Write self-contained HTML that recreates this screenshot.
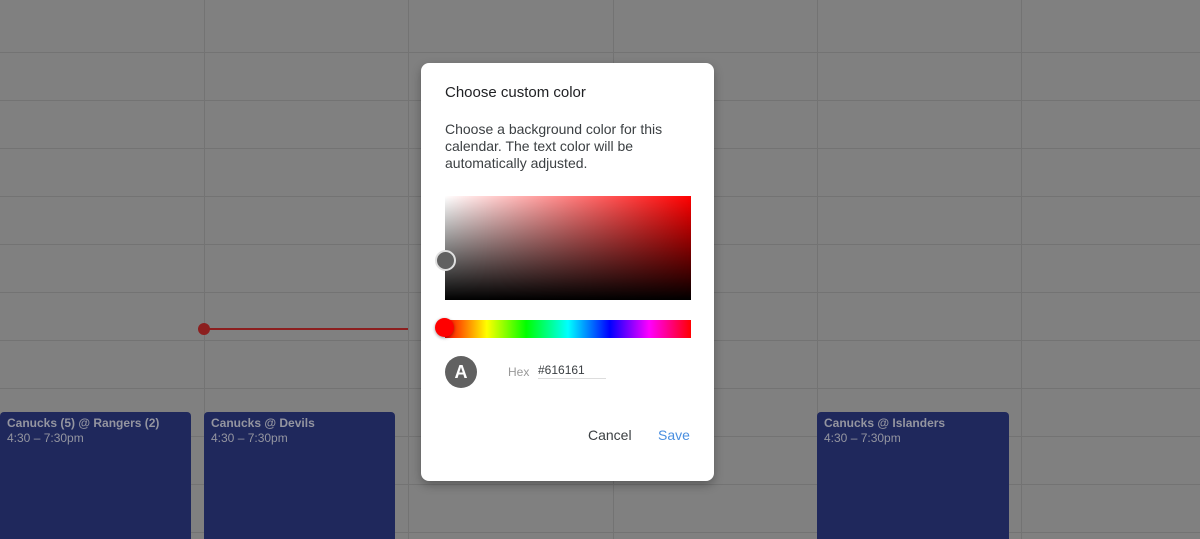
<!DOCTYPE html>
<html style="overflow:hidden;height:539px"><head><style>
body{margin:0;width:1200px;height:539px;overflow:hidden;background:#808080;font-family:"Liberation Sans",Arial,sans-serif;position:relative}
.v{position:absolute;top:0;bottom:0;width:1px;background:#737373}
.h{position:absolute;left:0;right:0;height:1px;background:#737373}
.ev{position:absolute;top:412px;height:127px;background:#1f285c;border-radius:4px 4px 0 0;color:#9495a0;font-size:12px;padding:4px 7px;box-sizing:border-box;line-height:15px}
.ev b{font-weight:bold}
.dlg{position:absolute;left:421px;top:63px;width:293px;height:418px;background:#fff;border-radius:8px;box-shadow:0 4px 10px rgba(0,0,0,.3)}
</style></head><body>
<div class="v" style="left:204px"></div><div class="v" style="left:408px"></div><div class="v" style="left:613px"></div><div class="v" style="left:817px"></div><div class="v" style="left:1021px"></div>
<div class="h" style="top:52px"></div><div class="h" style="top:100px"></div><div class="h" style="top:148px"></div><div class="h" style="top:196px"></div><div class="h" style="top:244px"></div><div class="h" style="top:292px"></div><div class="h" style="top:340px"></div><div class="h" style="top:388px"></div><div class="h" style="top:436px"></div><div class="h" style="top:484px"></div><div class="h" style="top:532px"></div>
<div style="position:absolute;left:204px;top:328px;width:204px;height:2px;background:#8c1f1f"></div>
<div style="position:absolute;left:198px;top:323px;width:12px;height:12px;border-radius:50%;background:#8c1f1f"></div>
<div class="ev" style="left:0;width:191px"><b>Canucks (5) @ Rangers (2)</b><br>4:30 – 7:30pm</div>
<div class="ev" style="left:204px;width:191px"><b>Canucks @ Devils</b><br>4:30 – 7:30pm</div>
<div class="ev" style="left:817px;width:192px"><b>Canucks @ Islanders</b><br>4:30 – 7:30pm</div>
<div class="dlg">
<div style="position:absolute;left:24px;top:21px;font-size:15px;color:#202124">Choose custom color</div>
<div style="position:absolute;left:24px;top:58px;width:250px;font-size:14px;line-height:17px;color:#3c4043">Choose a background color for this calendar. The text color will be automatically adjusted.</div>
<div style="position:absolute;left:24px;top:133px;width:246px;height:104px;background:linear-gradient(to top,#000,rgba(0,0,0,0)),linear-gradient(to right,#fff,#f00)"></div>
<div style="position:absolute;left:14px;top:187px;width:17px;height:17px;border-radius:50%;background:#616161;border:2px solid #e0e0e0"></div>
<div style="position:absolute;left:24px;top:257px;width:246px;height:18px;background:linear-gradient(to right,#f00,#ff0 17%,#0f0 33%,#0ff 50%,#00f 67%,#f0f 83%,#f00)"></div>
<div style="position:absolute;left:14px;top:255px;width:19px;height:19px;border-radius:50%;background:#f00;box-shadow:0 1px 3px rgba(0,0,0,.4)"></div>
<div style="position:absolute;left:24px;top:293px;width:32px;height:32px;border-radius:50%;background:#616161;color:#fff;font-weight:bold;font-size:18px;text-align:center;line-height:32px">A</div>
<div style="position:absolute;left:87px;top:302px;font-size:12px;color:#999">Hex</div>
<div style="position:absolute;left:117px;top:300px;width:68px;font-size:12px;color:#3c4043;border-bottom:1px solid #ddd;padding-bottom:1px">#616161</div>
<div style="position:absolute;left:167px;top:364px;font-size:14px;color:#3c4043">Cancel</div>
<div style="position:absolute;left:237px;top:364px;font-size:14px;color:#4a8fe0">Save</div>
</div>
</body></html>
